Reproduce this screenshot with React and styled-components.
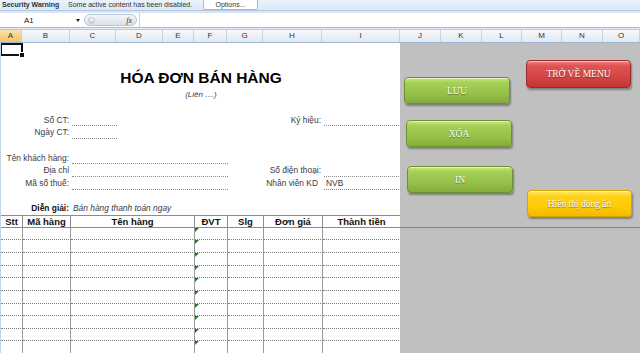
import React from "react";
import styled, { createGlobalStyle } from "styled-components";

const GlobalStyle = createGlobalStyle`
  html, body {
    margin: 0;
    padding: 0;
    overflow: hidden;
    background: #ffffff;
  }
  body {
    font-family: "Liberation Sans", Arial, sans-serif;
  }
`;

const COLS = [
  { name: "A", w: 22 },
  { name: "B", w: 48 },
  { name: "C", w: 46 },
  { name: "D", w: 47 },
  { name: "E", w: 31 },
  { name: "F", w: 33 },
  { name: "G", w: 36 },
  { name: "H", w: 59 },
  { name: "I", w: 78 },
  { name: "J", w: 41 },
  { name: "K", w: 41 },
  { name: "L", w: 40 },
  { name: "M", w: 40 },
  { name: "N", w: 41 },
  { name: "O", w: 37 },
];

const Window = styled.div`
  width: 640px;
  height: 353px;
  overflow: hidden;
  display: flex;
  flex-direction: column;
  background: #fff;
`;

// security warning strip at the top of the shot
const SecurityBar = styled.div`
  height: 10px;
  flex: none;
  overflow: hidden;
  display: flex;
  align-items: flex-start;
  background: linear-gradient(#eaf2fb, #dde9f7);
  border-bottom: 1px solid #b3c7e0;
  font-size: 7px;
  color: #333;
  span {
    line-height: 10px;
    white-space: nowrap;
  }
`;

const WarnTitle = styled.span`
  font-weight: bold;
  margin-left: 2px;
  width: 66px;
`;

const WarnText = styled.span`
  width: 135px;
`;

const OptionsButton = styled.span`
  width: 55px;
  height: 10px;
  box-sizing: border-box;
  background: #fff;
  border: 1px solid #a7b8cf;
  border-top: none;
  border-radius: 0 0 2px 2px;
  text-align: center;
  line-height: 9px !important;
`;

const BarGap = styled.div`
  height: 2px;
  flex: none;
  background: #dbe6f4;
`;

const FormulaBar = styled.div`
  height: 14px;
  flex: none;
  display: flex;
  align-items: stretch;
  background: #fff;
  border-bottom: 1px solid #a5bbd6;
  font-size: 8px;
  color: #222;
`;

const NameBox = styled.div`
  width: 84px;
  position: relative;
  display: flex;
  align-items: center;
  padding-left: 24px;
  box-sizing: border-box;
  &::after {
    content: "";
    position: absolute;
    right: 4px;
    top: 6px;
    border-left: 2.5px solid transparent;
    border-right: 2.5px solid transparent;
    border-top: 3px solid #222;
  }
`;

const FxPill = styled.div`
  width: 53px;
  margin: 1px 0;
  border-radius: 7px;
  background: linear-gradient(#f4f7fb, #d9e1ec);
  border: 1px solid #b7c4d6;
  display: flex;
  align-items: center;
  justify-content: space-between;
  padding: 0 4px 0 3px;
  box-sizing: border-box;
  font-family: "Liberation Serif", serif;
  font-style: italic;
  font-size: 8px;
  color: #333;
`;

const Dot = styled.span`
  width: 7px;
  height: 7px;
  border-radius: 50%;
  background: linear-gradient(#ffffff, #c4ccd8);
  border: 1px solid #b8c3d2;
  box-sizing: border-box;
`;

const FormulaInput = styled.div`
  flex: 1;
  margin-left: 2px;
  border-left: 1px solid #c6d3e3;
`;

const HeaderGap = styled.div`
  height: 1px;
  flex: none;
  background: #e6edf6;
`;

const ColumnHeaders = styled.div`
  height: 12px;
  flex: none;
  display: flex;
  border-top: 1px solid #b5c7dc;
  border-bottom: 1px solid #9eb6ce;
`;

const ColHead = styled.div`
  width: ${(p) => p.$w}px;
  flex: none;
  box-sizing: border-box;
  border-right: 1px solid #c3d1e2;
  background: ${(p) =>
    p.$active
      ? "linear-gradient(#fbe2ad, #f2c36a)"
      : "linear-gradient(#f6f9fc, #e1e8f1)"};
  font-size: 8px;
  line-height: 12px;
  text-align: center;
  color: #333;
`;

const SheetArea = styled.div`
  flex: 1;
  display: grid;
  grid-template-columns: 400px 1fr;
  min-height: 0;
`;

const InvoiceSheet = styled.div`
  display: grid;
  grid-template-columns: 22px 48px 46px 47px 31px 33px 36px 59px 78px;
  grid-template-rows: 13px 45px repeat(20, 12.67px);
  background: #fff;
  border-left: 1px solid #c5d5e8;
  font-size: 8.4px;
  color: #3a3a48;
  overflow: hidden;
`;

const SelectedCell = styled.div`
  grid-column: 1;
  grid-row: 1;
  margin-left: -1px;
  border: 2px solid #111;
  position: relative;
  &::after {
    content: "";
    position: absolute;
    right: -4px;
    bottom: -4px;
    width: 4px;
    height: 4px;
    background: #111;
    border: 1px solid #fff;
  }
`;

const TitleBlock = styled.div`
  grid-column: 1 / -1;
  grid-row: 2;
  display: flex;
  flex-direction: column;
  align-items: center;
  padding-top: 13px;
`;

const Title = styled.div`
  font-size: 15.5px;
  line-height: 18px;
  font-weight: bold;
  color: #000;
`;

const Copy = styled.div`
  margin-top: 3px;
  font-size: 8px;
  line-height: 10px;
  font-style: italic;
  color: #3a3a60;
`;

const Label = styled.div`
  grid-column: ${(p) => p.$c};
  grid-row: ${(p) => p.$r};
  text-align: right;
  padding-right: ${(p) => p.$pad ?? 2}px;
  line-height: 12.67px;
  white-space: nowrap;
  font-weight: ${(p) => (p.$bold ? "bold" : "normal")};
  color: ${(p) => (p.$bold ? "#111" : "#3a3a48")};
`;

const Field = styled.div`
  grid-column: ${(p) => p.$c};
  grid-row: ${(p) => p.$r};
  margin-left: 1px;
  border-bottom: 1px dotted #8a8a8a;
  padding-left: 2px;
  line-height: 12px;
  white-space: nowrap;
`;

const Note = styled.div`
  grid-column: ${(p) => p.$c};
  grid-row: ${(p) => p.$r};
  padding-left: 2px;
  line-height: 12.67px;
  font-style: italic;
  white-space: nowrap;
`;

const HeadCell = styled.div`
  grid-column: ${(p) => p.$c};
  grid-row: 12;
  border-top: 1px solid #8c8c8c;
  border-bottom: 1px solid #8c8c8c;
  border-right: 1px solid #8c8c8c;
  font-size: 9.5px;
  font-weight: bold;
  color: #111;
  text-align: center;
  line-height: 11px;
  white-space: nowrap;
`;

const DataCell = styled.div`
  grid-column: ${(p) => p.$c};
  grid-row: ${(p) => p.$r};
  border-bottom: 1px dotted #7d7d7d;
  border-right: 1px solid #9a9a9a;
  position: relative;
  &::before {
    content: "";
    display: ${(p) => (p.$marker ? "block" : "none")};
    position: absolute;
    left: 0;
    top: 0;
    border-top: 4px solid #1d7b1d;
    border-right: 4px solid transparent;
  }
`;

const ButtonPanel = styled.div`
  position: relative;
  display: grid;
  grid-template-rows: 183.7px 1px 1fr;
  background: #c0c0c0;
`;

const Rule = styled.div`
  grid-row: 2;
  background: #858585;
`;

const TONES = {
  green: {
    bg: "linear-gradient(#c9ea86 0%, #a6d058 18%, #97c24a 60%, #84ad3b 100%)",
    border: "#6e9230",
  },
  red: {
    bg: "linear-gradient(#f08a8a 0%, #e05454 18%, #d64545 60%, #c23535 100%)",
    border: "#9c2b2b",
  },
  yellow: {
    bg: "linear-gradient(#ffec70 0%, #ffd21a 20%, #ffcb05 60%, #f2b900 100%)",
    border: "#d8a300",
  },
};

const ShapeButton = styled.button`
  position: absolute;
  left: ${(p) => p.$x}px;
  top: ${(p) => p.$y}px;
  width: ${(p) => p.$w}px;
  height: ${(p) => p.$h}px;
  padding: 0;
  margin: 0;
  border: 1px solid ${(p) => TONES[p.$tone].border};
  border-radius: 4px;
  background: ${(p) => TONES[p.$tone].bg};
  box-shadow: 1px 2px 2px rgba(0, 0, 0, 0.35),
    inset 0 1px 0 rgba(255, 255, 255, 0.45);
  font-family: "Liberation Serif", "Times New Roman", serif;
  font-size: 9.5px;
  color: #fff;
  text-shadow: 0 1px 1px rgba(0, 0, 0, 0.45);
  cursor: pointer;
`;

const rows = Array.from({ length: 10 }, (_, i) => 13 + i);
const dataCols = ["1", "2", "3 / 6", "6", "7", "8", "9"];

const App = () => {
  return (
    <Window>
      <GlobalStyle />
      <SecurityBar>
        <WarnTitle>Security Warning</WarnTitle>
        <WarnText>Some active content has been disabled.</WarnText>
        <OptionsButton>Options...</OptionsButton>
      </SecurityBar>
      <BarGap />
      <FormulaBar>
        <NameBox>A1</NameBox>
        <FxPill>
          <Dot />
          <span>fx</span>
        </FxPill>
        <FormulaInput />
      </FormulaBar>
      <HeaderGap />
      <ColumnHeaders>
        {COLS.map((c, i) => (
          <ColHead key={c.name} $w={c.w} $active={i === 0}>
            {c.name}
          </ColHead>
        ))}
      </ColumnHeaders>

      <SheetArea>
        <InvoiceSheet>
          <SelectedCell />
          <TitleBlock>
            <Title>HÓA ĐƠN BÁN HÀNG</Title>
            <Copy>(Liên ....)</Copy>
          </TitleBlock>

          <Label $c="1 / 3" $r={4}>Số CT:</Label>
          <Field $c="3" $r={4} />
          <Label $c="7 / 9" $r={4}>Ký hiệu:</Label>
          <Field $c="9" $r={4} />

          <Label $c="1 / 3" $r={5}>Ngày CT:</Label>
          <Field $c="3" $r={5} />

          <Label $c="1 / 3" $r={7}>Tên khách hàng:</Label>
          <Field $c="3 / 7" $r={7} />

          <Label $c="1 / 3" $r={8}>Địa chỉ</Label>
          <Field $c="3 / 7" $r={8} />
          <Label $c="7 / 9" $r={8}>Số điện thoại:</Label>
          <Field $c="9" $r={8} />

          <Label $c="1 / 3" $r={9}>Mã số thuế:</Label>
          <Field $c="3 / 7" $r={9} />
          <Label $c="7 / 9" $r={9} $pad={5}>Nhân viên KD</Label>
          <Field $c="9" $r={9}>NVB</Field>

          <Label $c="1 / 3" $r={11} $bold>Diễn giải:</Label>
          <Note $c="3 / -1" $r={11}>Bán hàng thanh toán ngay</Note>

          <HeadCell $c="1">Stt</HeadCell>
          <HeadCell $c="2">Mã hàng</HeadCell>
          <HeadCell $c="3 / 6">Tên hàng</HeadCell>
          <HeadCell $c="6">ĐVT</HeadCell>
          <HeadCell $c="7">Slg</HeadCell>
          <HeadCell $c="8">Đơn giá</HeadCell>
          <HeadCell $c="9">Thành tiền</HeadCell>

          {rows.map((r) =>
            dataCols.map((c) => (
              <DataCell key={`${r}-${c}`} $c={c} $r={r} $marker={c === "6"} />
            ))
          )}
        </InvoiceSheet>

        <ButtonPanel>
          <Rule />
          <ShapeButton $tone="red" $x={126} $y={17} $w={105} $h={28}>
            TRỞ VỀ MENU
          </ShapeButton>
          <ShapeButton $tone="green" $x={4} $y={34} $w={106} $h={27}>
            LƯU
          </ShapeButton>
          <ShapeButton $tone="green" $x={6} $y={77} $w={106} $h={27}>
            XÓA
          </ShapeButton>
          <ShapeButton $tone="green" $x={7} $y={123} $w={106} $h={27}>
            IN
          </ShapeButton>
          <ShapeButton $tone="yellow" $x={127} $y={147} $w={105} $h={27}>
            Hiển thị dòng ẩn
          </ShapeButton>
        </ButtonPanel>
      </SheetArea>
    </Window>
  );
};

export default App;
